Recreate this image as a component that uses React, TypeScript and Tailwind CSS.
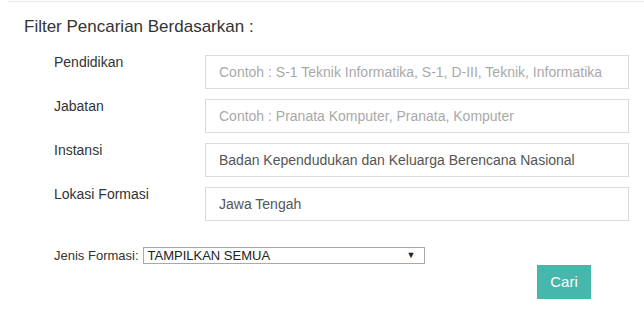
import React from "react";

const rows = [
  { label: "Pendidikan", placeholder: "Contoh : S-1 Teknik Informatika, S-1, D-III, Teknik, Informatika", value: "" },
  { label: "Jabatan", placeholder: "Contoh : Pranata Komputer, Pranata, Komputer", value: "" },
  { label: "Instansi", placeholder: "", value: "Badan Kependudukan dan Keluarga Berencana Nasional" },
  { label: "Lokasi Formasi", placeholder: "", value: "Jawa Tengah" },
];

export default function App() {
  return (
    <div className="w-[644px] h-[328px] bg-white font-['Liberation_Sans',Arial,sans-serif] text-[#333] overflow-hidden">
      <div className="ml-2 mt-px border-t border-[#e6e6e6]">
        <div className="pl-4 pt-[14px] text-[17px] leading-[22px] text-[#333]">Filter Pencarian Berdasarkan :</div>
        <div className="mt-[17px] flex flex-col gap-[10px]">
          {rows.map((r) => (
            <div key={r.label} className="flex h-[34px]">
              <div className="w-[197px] pl-[46px] -mt-[1px] text-[14px] leading-[16px] text-[#333]">{r.label}</div>
              <input
                readOnly
                className="w-[424px] h-[34px] border border-[#dcdcdc] px-[13px] text-[14px] text-[#555] placeholder:text-[#a9a9a9] outline-none"
                placeholder={r.placeholder}
                defaultValue={r.value}
              />
            </div>
          ))}
        </div>
        <div className="mt-[25px] flex items-center pl-[46px] text-[13px]">
          <span className="text-[#333]">Jenis Formasi:</span>
          <div className="ml-[4px] w-[282px] h-[17px] border border-[#a9a9a9] flex items-center justify-between pl-[4px] pr-[8px] text-[13px] leading-[15px] text-[#222]">
            <span>TAMPILKAN SEMUA</span>
            <span className="text-[9px] leading-[9px]">▼</span>
          </div>
        </div>
        <div className="flex pl-[529px] -mt-[1px]">
          <button className="w-[54px] h-[34px] bg-[#47b6ab] text-white text-[15px] leading-[20px]">Cari</button>
        </div>
      </div>
    </div>
  );
}
